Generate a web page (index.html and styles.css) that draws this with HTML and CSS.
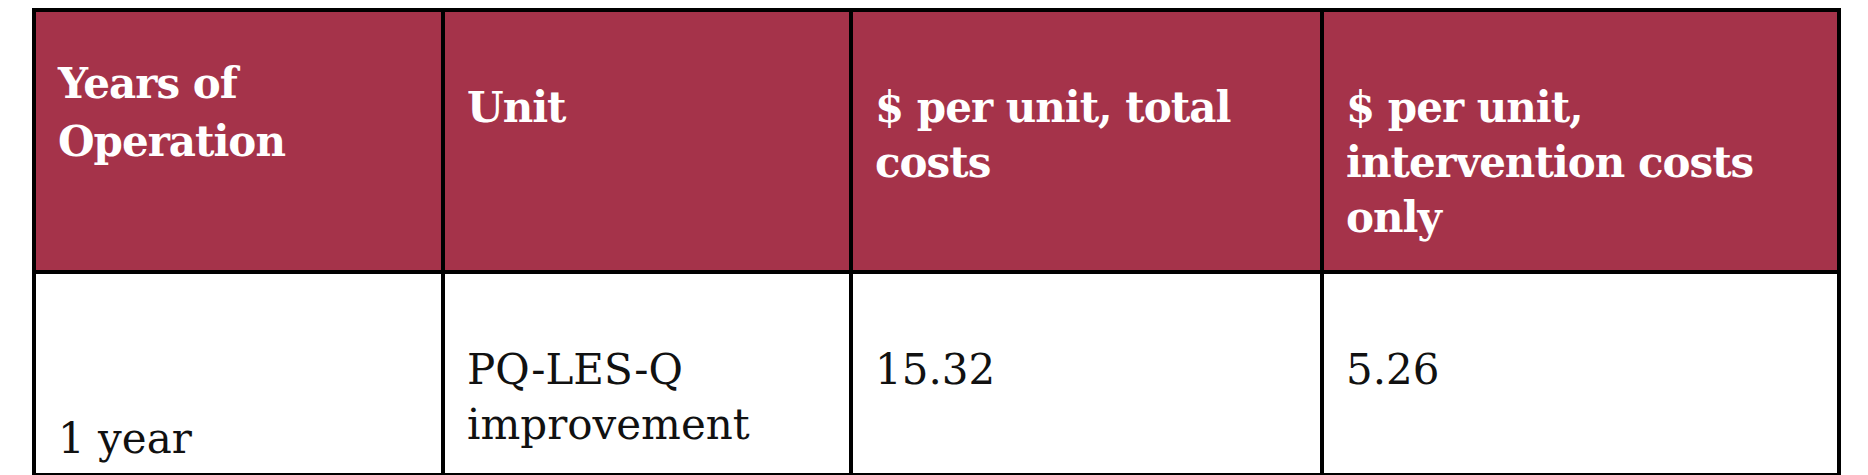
FILE: index.html
```html
<!DOCTYPE html>
<html lang="en">
<head>
<meta charset="utf-8">
<title>Cost table</title>
<link rel="stylesheet" href="styles.css">
</head>
<body>
<div class="cost-table">
  <div class="cell head head-first">Years of<br>Operation</div>
  <div class="cell head">Unit</div>
  <div class="cell head">$ per unit, total<br>costs</div>
  <div class="cell head">$ per unit,<br>intervention costs<br>only</div>
  <div class="cell body body-first">1 year</div>
  <div class="cell body">PQ-LES-Q<br>improvement</div>
  <div class="cell body">15.32</div>
  <div class="cell body">5.26</div>
</div>
</body>
</html>
```
FILE: styles.css
```css
html, body {
  margin: 0;
  padding: 0;
  background: #ffffff;
}

body {
  font-family: "DejaVu Serif", "Liberation Serif", serif;
}

.cost-table {
  display: grid;
  grid-template-columns: 405px 404px 467px 513px;
  grid-template-rows: 258px 199px;
  gap: 4px;
  padding: 4px;
  background: #000000;
  width: max-content;
  margin: 8px 0 0 32px;
}

.cell {
  padding: 68px 22px 0 22px;
  font-size: 42px;
  line-height: 55px;
}

.head {
  background: #a5334a;
  color: #ffffff;
  font-weight: bold;
  letter-spacing: -1px;
}

.head-first {
  padding-top: 43px;
  line-height: 58px;
}

.body {
  background: #ffffff;
  color: #111111;
}

.body-first {
  display: flex;
  align-items: flex-end;
  padding: 0 22px 7px 22px;
}
```
